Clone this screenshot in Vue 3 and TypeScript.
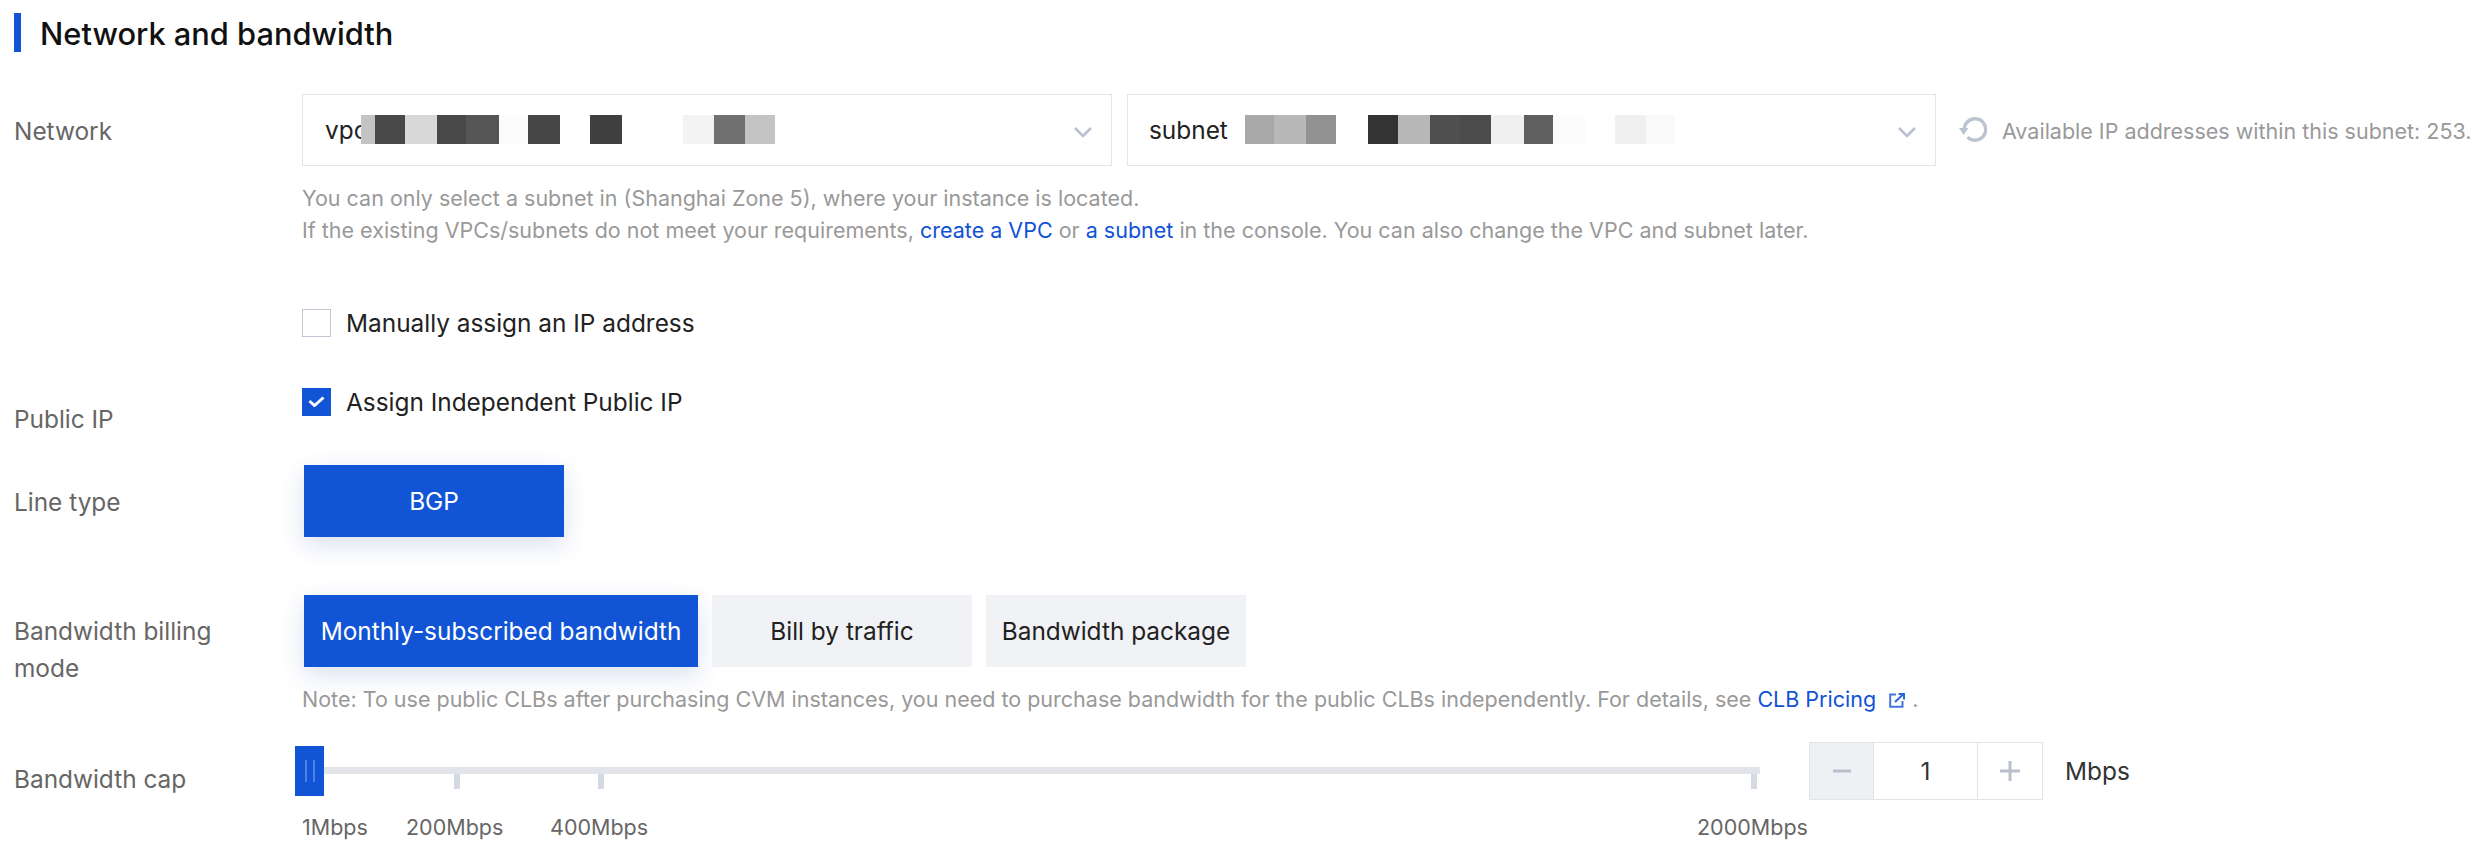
<script setup lang="ts">
interface Cell { w: number; c: string }
const vpcCells: Cell[] = [
  { w: 14, c: '#c4c4c4' }, { w: 30, c: '#484848' }, { w: 32, c: '#d8d8d8' }, { w: 29, c: '#484848' },
  { w: 33, c: '#555555' }, { w: 29, c: '#fbfbfb' }, { w: 32, c: '#454545' }, { w: 30, c: '#ffffff' },
  { w: 32, c: '#3f3f3f' }, { w: 61, c: '#ffffff' }, { w: 31, c: '#f3f3f3' }, { w: 31, c: '#707070' },
  { w: 30, c: '#c4c4c4' }
]
const subnetCells: Cell[] = [
  { w: 29, c: '#a8a8a8' }, { w: 32, c: '#b8b8b8' }, { w: 30, c: '#929292' }, { w: 32, c: '#ffffff' },
  { w: 30, c: '#333333' }, { w: 32, c: '#b8b8b8' }, { w: 30, c: '#505050' }, { w: 31, c: '#4c4c4c' },
  { w: 33, c: '#f0f0f0' }, { w: 29, c: '#5f5f5f' }, { w: 32, c: '#fbfbfb' }, { w: 30, c: '#ffffff' },
  { w: 31, c: '#f0f0f0' }, { w: 29, c: '#fafafa' }
]
const ticks = [
  { x: 159, label: '200Mbps', lx: 111 },
  { x: 303, label: '400Mbps', lx: 255 },
  { x: 1456, label: '2000Mbps', lx: 1402 }
]
</script>

<template>
  <div class="page">
    <div class="title"><span class="title-bar"></span><h2>Network and bandwidth</h2></div>

    <div class="row network">
      <div class="label lb-net">Network</div>
      <div class="control">
        <div class="selects">
          <div class="select vpc">
            <span class="value">vpc</span>
            <span class="mosaic">
              <i v-for="(m, i) in vpcCells" :key="i" :style="{ width: m.w + 'px', background: m.c }"></i>
            </span>
            <svg class="chev" width="18" height="11" viewBox="0 0 18 11"><path d="M1 1l8 8 8-8" fill="none" stroke="#b9c1d0" stroke-width="2.6"/></svg>
          </div>
          <div class="select subnet">
            <span class="value">subnet</span>
            <span class="mosaic">
              <i v-for="(m, i) in subnetCells" :key="i" :style="{ width: m.w + 'px', background: m.c }"></i>
            </span>
            <svg class="chev" width="18" height="11" viewBox="0 0 18 11"><path d="M1 1l8 8 8-8" fill="none" stroke="#b9c1d0" stroke-width="2.6"/></svg>
          </div>
          <svg class="refresh" width="28" height="26" viewBox="0 0 28 26">
            <path d="M5.3 12A10.7 10.7 0 1 1 8.5 20.1" fill="none" stroke="#bcc3d0" stroke-width="3.4"/>
            <path d="M0 11h9.5L4.7 18z" fill="#bcc3d0"/>
          </svg>
          <span class="avail">Available IP addresses within this subnet: 253.</span>
        </div>
        <p class="hint first">You can only select a subnet in (Shanghai Zone 5), where your instance is located.</p>
        <p class="hint">If the existing VPCs/subnets do not meet your requirements, <a>create a VPC</a> or <a>a subnet</a> in the console. You can also change the VPC and subnet later.</p>
        <label class="check manual"><span class="box"></span>Manually assign an IP address</label>
      </div>
    </div>

    <div class="row public">
      <div class="label lb-pub">Public IP</div>
      <div class="control">
        <label class="check">
          <span class="box on">
            <svg width="17" height="11" viewBox="0 0 17 11"><path d="M1.5 5l5 4.5 9-8" fill="none" stroke="#fff" stroke-width="3"/></svg>
          </span>Assign Independent Public IP
        </label>
      </div>
    </div>

    <div class="row line">
      <div class="label lb-line">Line type</div>
      <div class="control btns"><button class="btn active wide">BGP</button></div>
    </div>

    <div class="row billing">
      <div class="label lb-bill">Bandwidth billing mode</div>
      <div class="control">
        <div class="btns">
          <button class="btn active monthly">Monthly-subscribed bandwidth</button>
          <button class="btn wide">Bill by traffic</button>
          <button class="btn wide">Bandwidth package</button>
        </div>
        <p class="hint first">Note: To use public CLBs after purchasing CVM instances, you need to purchase bandwidth for the public CLBs independently. For details, see <a>CLB Pricing</a><svg class="ext" width="17" height="15" viewBox="0 0 17 15"><path d="M7 1.5H1.2v12.3h12.3V8" fill="none" stroke="#3f74dd" stroke-width="2"/><path d="M6 9l8-7.5M9.5 1h5.5v5.5" fill="none" stroke="#2a65da" stroke-width="2"/></svg><span class="dot">.</span></p>
      </div>
    </div>

    <div class="row cap">
      <div class="label lb-cap">Bandwidth cap</div>
      <div class="control cap-control">
        <div class="slider">
          <div class="track"></div>
          <div class="handle"><i></i><i></i></div>
          <template v-for="t in ticks" :key="t.label">
            <span class="tick" :style="{ left: t.x + 'px' }"></span>
            <span class="tick-label" :style="{ left: t.lx + 'px' }">{{ t.label }}</span>
          </template>
          <span class="tick-label" :style="{ left: '7px' }">1Mbps</span>
        </div>
        <div class="stepper">
          <span class="step minus"><svg width="18" height="18" viewBox="0 0 18 18"><path d="M0 9h18" stroke="#b8c0cd" stroke-width="3"/></svg></span>
          <span class="num">1</span>
          <span class="step plus"><svg width="20" height="20" viewBox="0 0 20 20"><path d="M0 10h20M10 0v20" stroke="#b8c0cd" stroke-width="3"/></svg></span>
        </div>
        <span class="unit">Mbps</span>
      </div>
    </div>
  </div>
</template>

<style scoped>
.page {
  width: 2482px;
  height: 848px;
  box-sizing: border-box;
  padding: 13px 0 0 14px;
  background: #fff;
  font-family: Inter, "Noto Sans", sans-serif;
  font-size: 24.4px;
  color: #222;
  overflow: hidden;
}
.title { display: flex; align-items: center; height: 39px; gap: 19px; }
.title-bar { width: 7px; height: 39px; background: #1155d6; }
h2 { margin: 2px 0 0; font-size: 30.8px; font-weight: 500; color: #111; line-height: 39px; }
.row { display: flex; }
.label { width: 288px; flex: none; line-height: 37px; color: #666; box-sizing: border-box; padding-right: 30px; }
.control { flex: 1; min-width: 0; }
.network { margin-top: 42px; }
.lb-net { padding-top: 19px; }
.selects { display: flex; align-items: center; height: 72px; }
.select {
  position: relative;
  height: 72px;
  box-sizing: border-box;
  border: 1px solid #e3e4ec;
  display: flex;
  align-items: center;
  padding-left: 22px;
  color: #222;
}
.vpc { width: 810px; }
.subnet { width: 809px; margin-left: 15px; padding-left: 21px; }
.mosaic { position: absolute; top: 20px; display: flex; height: 29px; }
.vpc .mosaic { left: 58px; }
.subnet .mosaic { left: 117px; }
.mosaic i { display: block; height: 100%; }
.chev { position: absolute; right: 19px; top: 32px; }
.refresh { margin-left: 23px; flex: none; }
.avail { margin: 2px 0 0 15px; font-size: 21.5px; color: #999; white-space: nowrap; }
.hint { margin: 0; font-size: 21.5px; line-height: 32px; color: #999; white-space: nowrap; position: relative; top: 1px; }
.hint.first { margin-top: 15px; }
.hint a { color: #0f52d6; }
.ext { margin: 0 6px 0 13px; vertical-align: -1px; }
.check { display: flex; align-items: center; height: 37px; color: #222; }
.manual { margin-top: 59px; }
.box {
  width: 29px;
  height: 28px;
  box-sizing: border-box;
  border: 1px solid #bfc6d4;
  margin-right: 15px;
  display: flex;
  align-items: center;
  justify-content: center;
  flex: none;
}
.box.on { background: #1155d6; border-color: #1155d6; }
.public { margin-top: 42px; }
.lb-pub { padding-top: 18px; }
.line { margin-top: 27px; }
.lb-line { padding-top: 19px; }
.btns { display: flex; gap: 14px; padding-left: 2px; }
.btn {
  height: 72px;
  border: 0;
  padding: 0;
  font: inherit;
  color: #222;
  background: #f1f2f6;
}
.btn.active { background: #1155d6; color: #fff; box-shadow: 0 8px 24px rgba(17, 60, 160, 0.16); }
.wide { width: 260px; }
.monthly { width: 394px; }
.billing { margin-top: 58px; }
.lb-bill { padding-top: 18px; }
.cap { margin-top: 28px; }
.lb-cap { padding-top: 19px; }
.cap-control { display: flex; }
.slider { position: relative; width: 1465px; height: 106px; margin-left: -7px; }
.track { position: absolute; left: 8px; right: 0; top: 25px; height: 7px; background: #e3e4ea; }
.handle {
  position: absolute;
  left: 0;
  top: 4px;
  width: 29px;
  height: 50px;
  background: #1155d6;
  display: flex;
  justify-content: center;
  align-items: center;
  gap: 6px;
}
.handle i { width: 2px; height: 22px; background: #4d80e2; }
.tick { position: absolute; top: 32px; width: 6px; height: 15px; background: #d5d9e2; }
.tick-label { position: absolute; top: 69px; font-size: 21.5px; line-height: 32px; color: #666; white-space: nowrap; }
.stepper {
  margin-left: 49px;
  display: flex;
  width: 234px;
  height: 58px;
  box-sizing: border-box;
  border: 1px solid #e3e4ea;
}
.step { display: flex; align-items: center; justify-content: center; }
.minus { width: 63px; background: #eff0f4; }
.num { width: 105px; text-align: center; line-height: 56px; border-left: 1px solid #e3e4ea; border-right: 1px solid #e3e4ea; box-sizing: border-box; flex: none; color: #333; }
.plus { flex: 1; }
.unit { margin-left: 22px; line-height: 58px; color: #333; }
</style>
